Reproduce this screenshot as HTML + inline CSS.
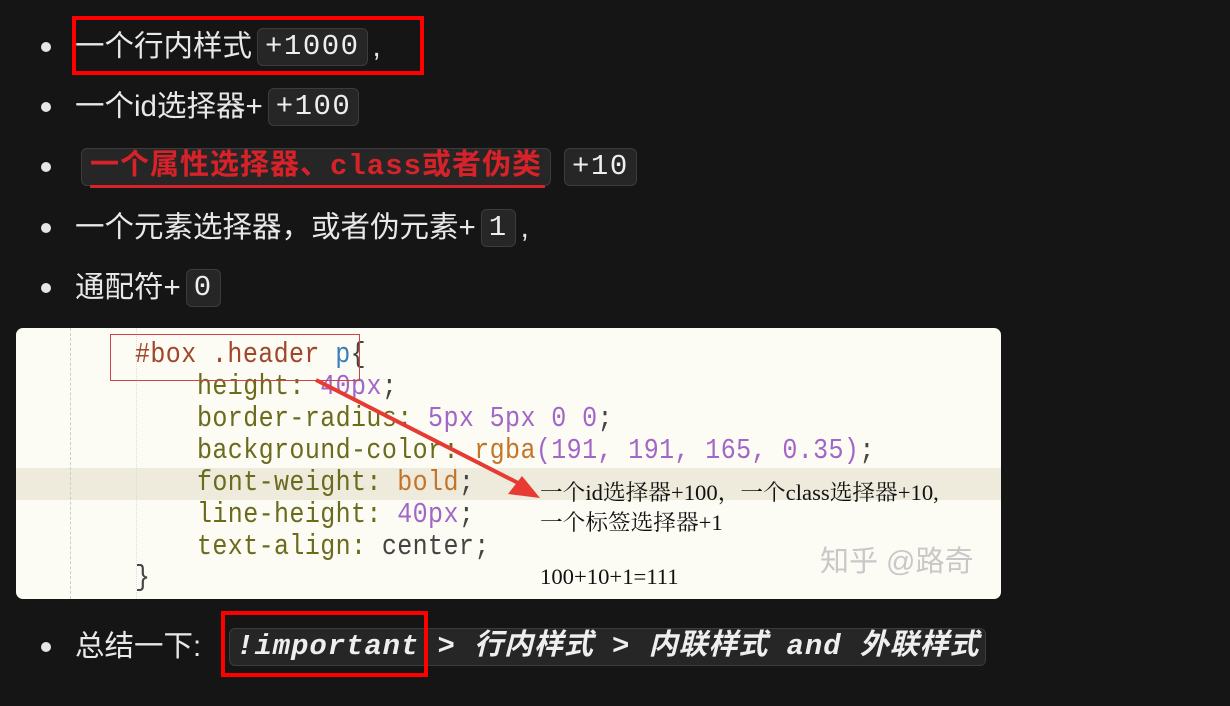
<!DOCTYPE html>
<html><head><meta charset="utf-8"><style>
body{margin:0;width:1230px;height:706px;background:#151515;position:relative;overflow:hidden;font-family:"Liberation Sans","Noto Sans CJK SC",sans-serif;color:#e8e8e8}
.row{position:absolute;left:75px;font-size:29.5px;line-height:38px;white-space:nowrap;display:flex;align-items:center}
.dot{position:absolute;left:41px;width:10px;height:10px;border-radius:50%;background:#e6e6e6}
.c{display:inline-block;background:#262626;border:1.5px solid #3c3c3c;border-radius:6px;padding:0 7px;font-family:"Liberation Mono","Noto Sans CJK SC",monospace;font-size:29px;letter-spacing:1.5px;line-height:36px;margin:0 5px;color:#eee}
.rb{position:absolute;border:4px solid #f00;box-sizing:border-box}
.img{position:absolute;left:16px;top:328px;width:985px;height:271px;background:#fdfcf4;border-radius:7px;overflow:hidden}
.cl{position:absolute;font-family:"Liberation Mono",monospace;font-size:25px;white-space:nowrap;color:#6b6b1e;transform:scaleY(1.15);letter-spacing:0.4px}
.n{color:#a266c9}.o{color:#c4752a}.k{color:#444}
.an{position:absolute;font-family:"Liberation Serif","Noto Serif CJK SC",serif;font-size:22px;color:#111;white-space:nowrap;transform-origin:left;transform:scaleX(1.03)}
</style></head><body>
<div class="dot" style="top:42px"></div>
<div class="row" style="top:28px">一个行内样式<span class="c">+1000</span>,</div>
<div class="rb" style="left:72px;top:16px;width:352px;height:59px"></div>
<div class="dot" style="top:102px"></div>
<div class="row" style="top:88px">一个id选择器+<span class="c">+100</span></div>
<div class="dot" style="top:162px"></div>
<div class="row" style="top:148px;left:76px"><span class="c" style="color:#d8222a;font-weight:bold;letter-spacing:1px;padding:0 8px">一个属性选择器、class或者伪类</span><span class="c" style="margin-left:8px">+10</span></div>
<div style="position:absolute;left:90px;top:185px;width:455px;height:3px;background:#d8222a"></div>
<div class="dot" style="top:223px"></div>
<div class="row" style="top:209px">一个元素选择器，或者伪元素+<span class="c">1</span>,</div>
<div class="dot" style="top:283px"></div>
<div class="row" style="top:269px">通配符+<span class="c">0</span></div>

<div class="img">
<div style="position:absolute;left:0;top:140px;width:985px;height:32px;background:#eeebdc"></div>
<div style="position:absolute;left:54px;top:0;height:271px;border-left:1px dashed #ccc"></div>
<div style="position:absolute;left:120px;top:0;height:271px;border-left:1px dotted #ddd"></div>
<div class="cl" style="left:119px;top:12px;color:#a0462a">#box .header <span style="color:#3a7fc0">p</span><span class="k">{</span></div>
<div class="cl" style="left:181px;top:44px">height: <span class="n">40px</span><span class="k">;</span></div>
<div class="cl" style="left:181px;top:76px">border-radius: <span class="n">5px 5px 0 0</span><span class="k">;</span></div>
<div class="cl" style="left:181px;top:108px">background-color: <span class="o">rgba</span><span class="n">(191, 191, 165, 0.35)</span><span class="k">;</span></div>
<div class="cl" style="left:181px;top:140px">font-weight: <span class="o">bold</span><span class="k">;</span></div>
<div class="cl" style="left:181px;top:172px">line-height: <span class="n">40px</span><span class="k">;</span></div>
<div class="cl" style="left:181px;top:204px">text-align: <span class="k">center;</span></div>
<div class="cl" style="left:119px;top:235px" ><span class="k">}</span></div>
<div style="position:absolute;left:94px;top:6px;width:250px;height:47px;border:1.5px solid #c44;box-sizing:border-box"></div>
<svg style="position:absolute;left:0;top:0" width="985" height="271"><line x1="300" y1="52" x2="512" y2="160" stroke="#e63a33" stroke-width="4"/><polygon points="524,170 492,166 506,148" fill="#e63a33"/></svg>
<div class="an" style="left:524px;top:148px">一个id选择器+100，一个class选择器+10,</div>
<div class="an" style="left:524px;top:178px">一个标签选择器+1</div>
<div class="an" style="left:524px;top:236px">100+10+1=111</div>
<div style="position:absolute;left:804px;top:210px;font-size:29px;color:#c8c8c8;font-family:'Liberation Sans','Noto Sans CJK SC',sans-serif">知乎 @路奇</div>
</div>

<div class="dot" style="top:642px"></div>
<div class="row" style="top:628px">总结一下:<span class="c" style="margin-left:28px;font-weight:bold;font-style:italic;padding:0 6px;letter-spacing:0.9px">!important &gt; 行内样式 &gt; 内联样式 and 外联样式</span></div>
<div class="rb" style="left:221px;top:611px;width:207px;height:66px"></div>
</body></html>
